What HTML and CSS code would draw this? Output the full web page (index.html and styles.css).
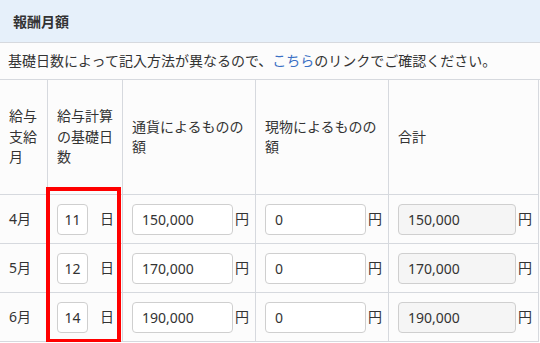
FILE: index.html
```html
<!DOCTYPE html>
<html lang="ja">
<head>
<meta charset="utf-8">
<title>報酬月額</title>
<link rel="stylesheet" href="styles.css">
</head>
<body>
<section class="panel">
  <h2 class="panel-head">報酬月額</h2>
  <p class="note">基礎日数によって記入方法が異なるので、<a class="link" href="#">こちら</a>のリンクでご確認ください。</p>
  <div class="grid">
    <div class="cell head">給与支給月</div>
    <div class="cell head">給与計算の基礎日数</div>
    <div class="cell head">通貨によるものの額</div>
    <div class="cell head">現物によるものの額</div>
    <div class="cell head">合計</div>

    <div class="cell">4月</div>
    <div class="cell days"><input class="field day" value="11"><span class="unit">日</span></div>
    <div class="cell"><input class="field" value="150,000"><span class="unit">円</span></div>
    <div class="cell"><input class="field" value="0"><span class="unit">円</span></div>
    <div class="cell"><input class="field readonly" value="150,000" readonly><span class="unit">円</span></div>

    <div class="cell">5月</div>
    <div class="cell days"><input class="field day" value="12"><span class="unit">日</span></div>
    <div class="cell"><input class="field" value="170,000"><span class="unit">円</span></div>
    <div class="cell"><input class="field" value="0"><span class="unit">円</span></div>
    <div class="cell"><input class="field readonly" value="170,000" readonly><span class="unit">円</span></div>

    <div class="cell">6月</div>
    <div class="cell days"><input class="field day" value="14"><span class="unit">日</span></div>
    <div class="cell"><input class="field" value="190,000"><span class="unit">円</span></div>
    <div class="cell"><input class="field" value="0"><span class="unit">円</span></div>
    <div class="cell"><input class="field readonly" value="190,000" readonly><span class="unit">円</span></div>
  </div>
  <div class="highlight"></div>
</section>
</body>
</html>
```
FILE: styles.css
```css
* { box-sizing: border-box; }
html, body { margin: 0; padding: 0; }
body {
  font-family: "Noto Sans", "Noto Sans CJK JP", sans-serif;
  font-size: 14px;
  color: #333;
  background: #fff;
}
.panel {
  position: relative;
  width: 540px;
}
.panel-head {
  margin: 0;
  height: 43px;
  display: flex;
  align-items: center;
  padding-left: 13px;
  font-size: 14px;
  font-weight: bold;
  background: #e6f0fa;
  border-bottom: 1px solid #d6d9de;
}
.note {
  margin: 0;
  height: 37px;
  display: flex;
  align-items: center;
  padding-left: 8px;
  background: #fcfcfc;
  border-bottom: 1px solid #d6d9de;
  line-height: 20px;
}
.link { color: #3a70c4; text-decoration: none; }
.grid {
  display: grid;
  grid-template-columns: 48px 75px 133px 133px 150px;
  grid-template-rows: 115px 49px 49px 49px;
  background: #fcfcfc;
}
.cell {
  display: flex;
  align-items: center;
  gap: 2px;
  padding: 0 6px 0 9px;
  border-right: 1px solid #d6d9de;
  border-bottom: 1px solid #d6d9de;
  line-height: 20.5px;
}
.cell.head { display: flex; }
.days { gap: 12px; }
.field {
  flex: 1 1 0;
  min-width: 0;
  height: 31px;
  padding: 0 9px;
  border: 1px solid #cfcfcf;
  border-radius: 4px;
  background: #fff;
  font: inherit;
  color: #333;
  outline: none;
}
.field.day {
  flex: none;
  width: 31px;
  padding: 0;
  text-align: center;
}
.field.readonly { background: #f5f5f5; }
.unit { flex: none; width: 14px; }
.highlight {
  position: absolute;
  left: 46px;
  top: 187px;
  width: 75px;
  height: 156px;
  border: 4px solid #ff0000;
  pointer-events: none;
}
```
